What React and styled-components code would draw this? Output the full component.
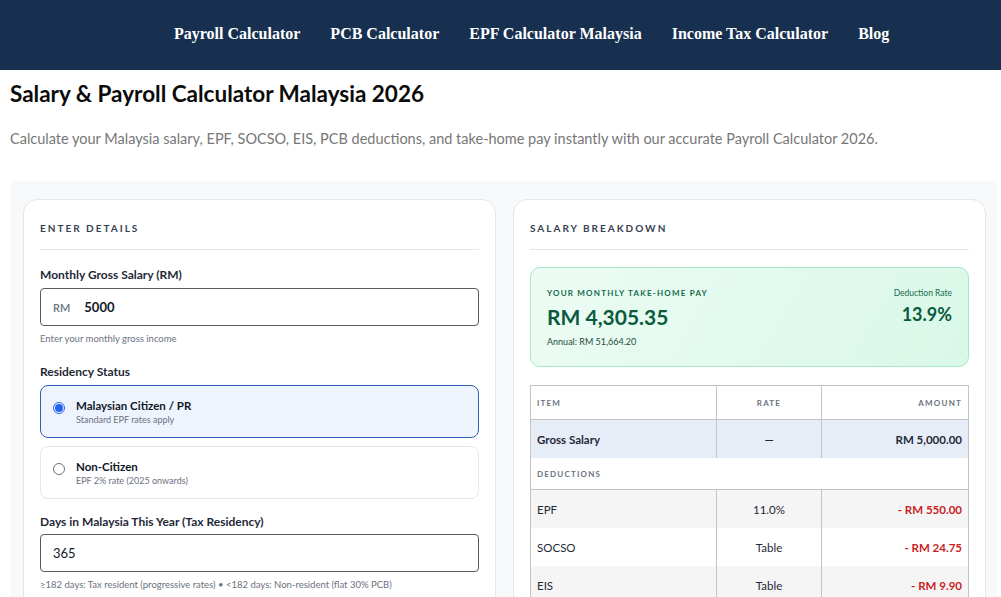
import React from "react"
import styled, { createGlobalStyle } from "styled-components"

const GlobalStyle = createGlobalStyle`
  body {
    margin: 0;
    background: #ffffff;
    font-family: "Lato", "Noto Sans", sans-serif;
    color: #111827;
  }
`

const Nav = styled("nav")`
  height: 70px;
  box-sizing: border-box;
  background: #17304f;
  display: flex;
  align-items: center;
  padding: 0 0 3px 174px;
  gap: 30px;
`
const NavLink = styled("a")`
  font-family: "Liberation Serif", "Times New Roman", serif;
  font-weight: 700;
  font-size: 16px;
  color: #ffffff;
  text-decoration: none;
  white-space: nowrap;
`

const Main = styled("main")`
  padding: 0 3px 0 10px;
`
const Title = styled("h1")`
  margin: 11px 0 0;
  font-size: 22.5px;
  font-weight: 700;
  line-height: 26px;
  color: #0b0b0b;
`
const Lead = styled("p")`
  margin: 22px 0 0;
  font-size: 14.5px;
  line-height: 20px;
  color: #777777;
`
const Panel = styled("section")`
  margin-top: 32px;
  background: #f8f9fa;
  padding: 18px 12px 0 13px;
  display: grid;
  grid-template-columns: 473px 473px;
  gap: 17px;
  height: 420px;
  overflow: hidden;
`
const Card = styled("div")`
  background: #ffffff;
  border: 1px solid #e5e7eb;
  border-radius: 14px;
  padding: 20px 16px;
`
const CardTitle = styled("h2")`
  margin: 0 0 17px;
  padding-bottom: 13px;
  border-bottom: 1px solid #e5e7eb;
  font-size: 10px;
  font-weight: 700;
  letter-spacing: 2px;
  line-height: 16px;
  color: #374151;
`
const Field = styled("div")`
  margin-bottom: ${p => p.$space || "19px"};
`
const Label = styled("div")`
  font-size: 12px;
  font-weight: 700;
  line-height: 16px;
  color: #1f2937;
  margin-bottom: ${p => p.$gap || "5px"};
`
const InputBox = styled("div")`
  height: 38px;
  box-sizing: border-box;
  border: 1px solid #5b5b5b;
  border-radius: 4px;
  display: flex;
  align-items: center;
  padding: 0 12px;
  gap: 14px;
`
const Prefix = styled("span")`
  font-size: 11px;
  color: #6b7280;
  font-weight: 600;
`
const Value = styled("span")`
  font-size: 13px;
  font-weight: ${p => (p.$bold ? 700 : 400)};
  color: #111827;
`
const Hint = styled("div")`
  margin-top: 7px;
  font-size: 9.5px;
  line-height: 12px;
  color: #6b7280;
`
const Options = styled("div")`
  display: flex;
  flex-direction: column;
  gap: 8px;
`
const Option = styled("div")`
  height: 53px;
  box-sizing: border-box;
  border: 1px solid ${p => (p.$active ? "#2f5fb3" : "#e5e7eb")};
  background: ${p => (p.$active ? "#eef4fe" : "#ffffff")};
  border-radius: 8px;
  display: flex;
  align-items: center;
  padding: 0 12px;
  gap: 11px;
`
const Radio = styled("span")`
  width: 12px;
  height: 12px;
  box-sizing: border-box;
  border-radius: 50%;
  border: 1px solid ${p => (p.$checked ? "#2563eb" : "#6b7280")};
  display: flex;
  align-items: center;
  justify-content: center;
  margin-top: -8px;
  &::after {
    content: "";
    width: 8px;
    height: 8px;
    border-radius: 50%;
    background: ${p => (p.$checked ? "#2563eb" : "transparent")};
  }
`
const OptionText = styled("div")`
  display: flex;
  flex-direction: column;
  gap: 2px;
`
const OptionTitle = styled("span")`
  font-size: 11.5px;
  font-weight: 700;
  color: #111827;
`
const OptionSub = styled("span")`
  font-size: 9px;
  color: #6b7280;
`

const Summary = styled("div")`
  height: 100px;
  box-sizing: border-box;
  border: 1px solid #a9e9c9;
  border-radius: 10px;
  background: linear-gradient(120deg, #ecfcf4 0%, #d9f8e8 100%);
  padding: 19px 16px 0;
  display: flex;
  justify-content: space-between;
  margin: 5px 0 18px;
`
const SummaryLeft = styled("div")`
  display: flex;
  flex-direction: column;
`
const SummaryRight = styled("div")`
  display: flex;
  flex-direction: column;
  align-items: flex-end;
`
const Kicker = styled("span")`
  font-size: 8px;
  font-weight: 700;
  letter-spacing: 1.2px;
  color: #146c4b;
  line-height: 12px;
`
const Small = styled("span")`
  font-size: 8.5px;
  color: #146c4b;
  line-height: 12px;
`
const Big = styled("span")`
  font-size: ${p => p.$size || "21px"};
  font-weight: 700;
  color: #0b5a3e;
  line-height: 26px;
  margin-top: ${p => p.$top || "5px"};
`
const Annual = styled("span")`
  font-size: 9px;
  color: #1f4d3b;
  margin-top: 6px;
`

const Table = styled("table")`
  width: 100%;
  border-collapse: collapse;
  table-layout: fixed;
  border: 1px solid #c4c4c4;
`
const Th = styled("th")`
  height: 33px;
  padding: 0 6px;
  font-size: 8px;
  font-weight: 700;
  letter-spacing: 1.2px;
  color: #6b7280;
  text-align: ${p => p.$align || "left"};
  border-left: 1px solid #c4c4c4;
  border-bottom: 1px solid #c4c4c4;
  &:first-child {
    border-left: none;
  }
`
const Row = styled("tr")`
  background: ${p => p.$bg || "#ffffff"};
`
const Td = styled("td")`
  height: 38px;
  padding: 0 6px;
  font-size: 11.5px;
  font-weight: ${p => (p.$bold ? 700 : 400)};
  color: ${p => p.$color || "#1f2937"};
  text-align: ${p => p.$align || "left"};
  border-left: 1px solid #c4c4c4;
  &:first-child {
    border-left: none;
  }
`
const Section = styled("td")`
  height: 31px;
  padding: 0 6px;
  font-size: 8px;
  font-weight: 700;
  letter-spacing: 1.2px;
  color: #6b7280;
  border-bottom: 1px solid #c4c4c4;
`

const links = [
  "Payroll Calculator",
  "PCB Calculator",
  "EPF Calculator Malaysia",
  "Income Tax Calculator",
  "Blog",
]

const deductions = [
  { item: "EPF", rate: "11.0%", amount: "- RM 550.00" },
  { item: "SOCSO", rate: "Table", amount: "- RM 24.75" },
  { item: "EIS", rate: "Table", amount: "- RM 9.90" },
]

export default function App() {
  return (
    <>
      <GlobalStyle />
      <Nav>
        {links.map(l => (
          <NavLink key={l} href="#">
            {l}
          </NavLink>
        ))}
      </Nav>
      <Main>
        <Title>Salary &amp; Payroll Calculator Malaysia 2026</Title>
        <Lead>
          Calculate your Malaysia salary, EPF, SOCSO, EIS, PCB deductions, and take-home pay
          instantly with our accurate Payroll Calculator 2026.
        </Lead>
        <Panel>
          <Card>
            <CardTitle>ENTER DETAILS</CardTitle>
            <Field>
              <Label>Monthly Gross Salary (RM)</Label>
              <InputBox>
                <Prefix>RM</Prefix>
                <Value $bold>5000</Value>
              </InputBox>
              <Hint>Enter your monthly gross income</Hint>
            </Field>
            <Field $space="15px">
              <Label>Residency Status</Label>
              <Options>
                <Option $active>
                  <Radio $checked />
                  <OptionText>
                    <OptionTitle>Malaysian Citizen / PR</OptionTitle>
                    <OptionSub>Standard EPF rates apply</OptionSub>
                  </OptionText>
                </Option>
                <Option>
                  <Radio />
                  <OptionText>
                    <OptionTitle>Non-Citizen</OptionTitle>
                    <OptionSub>EPF 2% rate (2025 onwards)</OptionSub>
                  </OptionText>
                </Option>
              </Options>
            </Field>
            <Field>
              <Label $gap="4px">Days in Malaysia This Year (Tax Residency)</Label>
              <InputBox>
                <Value>365</Value>
              </InputBox>
              <Hint>
                ≥182 days: Tax resident (progressive rates) • &lt;182 days: Non-resident (flat
                30% PCB)
              </Hint>
            </Field>
          </Card>
          <Card>
            <CardTitle>SALARY BREAKDOWN</CardTitle>
            <Summary>
              <SummaryLeft>
                <Kicker>YOUR MONTHLY TAKE-HOME PAY</Kicker>
                <Big>RM 4,305.35</Big>
                <Annual>Annual: RM 51,664.20</Annual>
              </SummaryLeft>
              <SummaryRight>
                <Small>Deduction Rate</Small>
                <Big $size="18px" $top="2px">
                  13.9%
                </Big>
              </SummaryRight>
            </Summary>
            <Table>
              <colgroup>
                <col style={{ width: "186px" }} />
                <col style={{ width: "105px" }} />
                <col />
              </colgroup>
              <thead>
                <tr>
                  <Th>ITEM</Th>
                  <Th $align="center">RATE</Th>
                  <Th $align="right">AMOUNT</Th>
                </tr>
              </thead>
              <tbody>
                <Row $bg="#e6edf7">
                  <Td $bold>Gross Salary</Td>
                  <Td $align="center" $bold>
                    —
                  </Td>
                  <Td $align="right" $bold>
                    RM 5,000.00
                  </Td>
                </Row>
                <tr>
                  <Section colSpan={3}>DEDUCTIONS</Section>
                </tr>
                {deductions.map((d, i) => (
                  <Row key={d.item} $bg={i % 2 === 0 ? "#f5f5f5" : "#ffffff"}>
                    <Td>{d.item}</Td>
                    <Td $align="center">{d.rate}</Td>
                    <Td $align="right" $bold $color="#c81e1e">
                      {d.amount}
                    </Td>
                  </Row>
                ))}
              </tbody>
            </Table>
          </Card>
        </Panel>
      </Main>
    </>
  )
}
